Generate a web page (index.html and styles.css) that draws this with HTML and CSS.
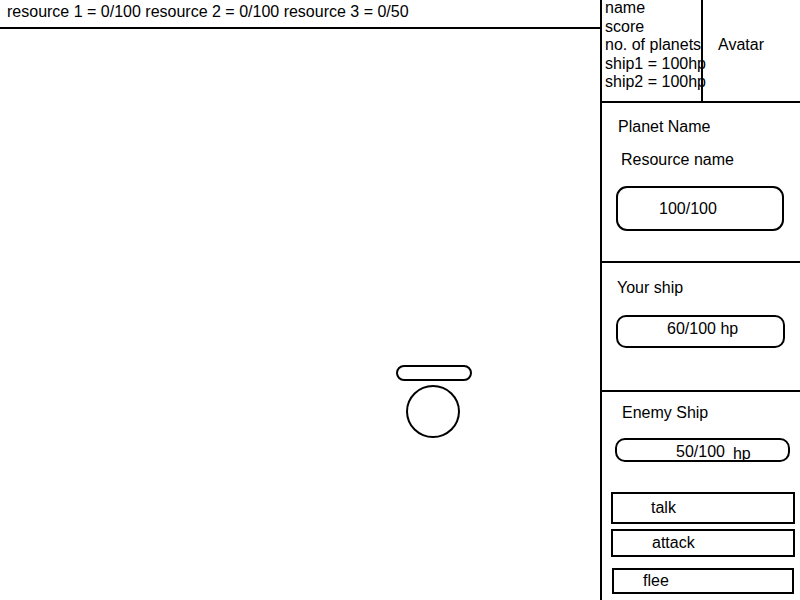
FILE: index.html
```html
<!DOCTYPE html>
<html>
<head>
<meta charset="utf-8">
<link rel="stylesheet" href="styles.css">
</head>
<body>
<div class="screen">
  <div class="main">
    <div class="topbar">resource 1 = 0/100 resource 2 = 0/100 resource 3 = 0/50</div>
    <div class="map">
      <div class="ship-bar"></div>
      <div class="ship"></div>
    </div>
  </div>
  <div class="sidebar">
    <div class="player">
      <div class="stats">
        <div>name</div>
        <div>score</div>
        <div>no. of planets</div>
        <div>ship1 = 100hp</div>
        <div>ship2 = 100hp</div>
      </div>
      <div class="avatar">Avatar</div>
    </div>
    <div class="planet">
      <div class="planet-name">Planet Name</div>
      <div class="resource-name">Resource name</div>
      <div class="pill planet-pill">100/100</div>
    </div>
    <div class="yours">
      <div class="yours-title">Your ship</div>
      <div class="pill yours-pill">60/100 hp</div>
    </div>
    <div class="enemy">
      <div class="enemy-title">Enemy Ship</div>
      <div class="pill enemy-pill"><span>50/100</span><span class="hp">hp</span></div>
      <div class="btn btn-talk">talk</div>
      <div class="btn btn-attack">attack</div>
      <div class="btn btn-flee">flee</div>
    </div>
  </div>
</div>
</body>
</html>
```

FILE: styles.css
```css
* { box-sizing: border-box; }
html, body { margin: 0; padding: 0; background: #fff; }
body {
  font-family: "Liberation Sans", Arial, sans-serif;
  font-size: 16px;
  line-height: 18px;
  color: #000;
}
.screen { display: flex; width: 800px; height: 600px; overflow: hidden; }
.main { width: 600px; display: flex; flex-direction: column; }
.topbar {
  height: 29px;
  border-bottom: 2px solid #000;
  padding: 3px 0 0 7px;
  white-space: nowrap;
}
.map { position: relative; flex: 1; }
.ship-bar {
  position: absolute;
  left: 396px; top: 336px;
  width: 76px; height: 16px;
  border: 2px solid #000;
  border-radius: 8px;
}
.ship {
  position: absolute;
  left: 406px; top: 356px;
  width: 54px; height: 53px;
  border: 2px solid #000;
  border-radius: 50%;
}
.sidebar {
  width: 200px;
  border-left: 2px solid #000;
  display: flex;
  flex-direction: column;
}
.player {
  height: 103px;
  border-bottom: 2px solid #000;
  display: flex;
}
.stats {
  width: 101px;
  border-right: 2px solid #000;
  padding: 0 0 0 3px;
  white-space: nowrap;
  line-height: 18.5px;
  margin-top: -1px;
}
.avatar { padding: 36px 0 0 15px; }
.planet {
  height: 160px;
  border-bottom: 2px solid #000;
  padding: 15px 0 0 14px;
}
.planet-name { padding-left: 2px; }
.resource-name { margin-top: 15px; padding-left: 5px; }
.pill { border: 2px solid #000; }
.planet-pill {
  margin-top: 17px;
  width: 168px; height: 45px;
  border-radius: 11px;
  padding: 12px 0 0 41px;
}
.yours {
  height: 129px;
  border-bottom: 2px solid #000;
  padding: 16px 0 0 14px;
}
.yours-title { padding-left: 1px; }
.yours-pill {
  margin-top: 18px;
  width: 169px; height: 33px;
  border-radius: 10px;
  padding: 3px 0 0 49px;
}
.enemy { flex: 1; padding: 12px 0 0 9px; }
.enemy-title { padding-left: 11px; }
.enemy-pill {
  margin: 16px 0 0 4px;
  width: 175px; height: 24px;
  border-radius: 10px;
  padding: 3px 0 0 59px;
  display: flex;
}
.enemy-pill .hp { margin-left: 8px; padding-top: 2px; }
.btn { border: 2px solid #000; }
.btn-talk { margin-top: 30px; width: 184px; height: 32px; padding: 5px 0 0 38px; }
.btn-attack { margin-top: 5px; width: 184px; height: 28px; padding: 3px 0 0 39px; }
.btn-flee { margin: 11px 0 0 1px; width: 182px; height: 26px; padding: 2px 0 0 29px; }
```
